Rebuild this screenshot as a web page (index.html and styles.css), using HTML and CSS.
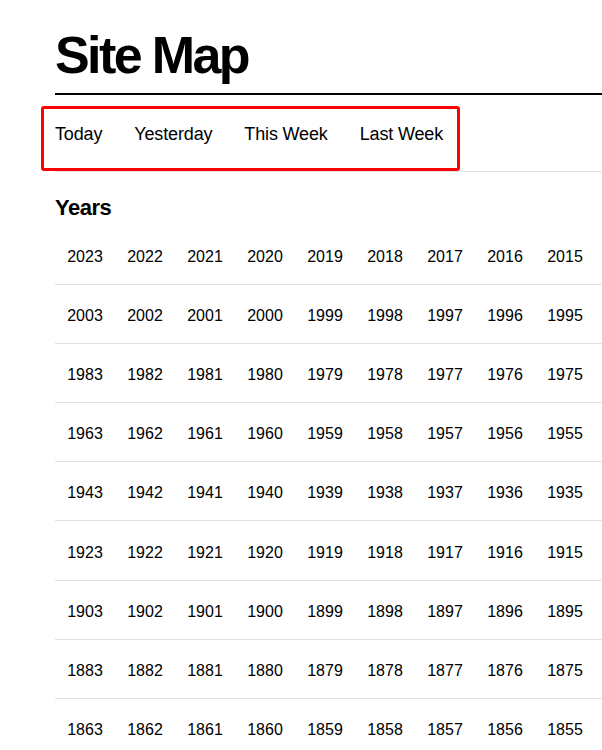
FILE: index.html
```html
<!DOCTYPE html>
<html lang="en">
<head>
  <meta charset="UTF-8">
  <meta name="viewport" content="width=device-width, initial-scale=1.0">
  <title>Site Map</title>
  <link rel="stylesheet" href="styles.css">
</head>
<body>
  <div class="page">
    <h1 class="title">Site Map</h1>
    <nav class="recent">
      <ul class="recent-links">
        <li><a href="#">Today</a></li>
        <li><a href="#">Yesterday</a></li>
        <li><a href="#">This Week</a></li>
        <li><a href="#">Last Week</a></li>
      </ul>
    </nav>
    <h2 class="section-title">Years</h2>
    <ul class="years" id="years"></ul>
  </div>

  <script>
    const yearsList = document.getElementById('years');

    // 20 years per row, newest first
    for (let year = 2023; year >= 1851; year--) {
      const item = document.createElement('li');
      const link = document.createElement('a');
      link.href = '#';
      link.textContent = year;
      item.appendChild(link);
      yearsList.appendChild(item);
    }
  </script>
</body>
</html>
```

FILE: styles.css
```css
body {
  margin: 0;
  font-family: "Liberation Sans", Arial, sans-serif;
  color: #000;
  background: #fff;
  overflow-x: hidden;
}
a {
  color: inherit;
  text-decoration: none;
}
ul {
  list-style: none;
  margin: 0;
  padding: 0;
}
.page {
  padding-left: 55px;
}
.title {
  margin: 25px 0 0;
  padding-bottom: 8px;
  font-size: 52px;
  line-height: 60px;
  font-weight: 700;
  letter-spacing: -2.6px;
  border-bottom: 2px solid #000;
}
.recent {
  padding-top: 11px;
  border-bottom: 1px solid #e2e2e2;
}
.recent-links {
  display: inline-flex;
  gap: 32px;
  margin-left: -14px;
  padding: 13px 14px 22px 11px;
  border: 3px solid #f00;
  border-radius: 3px;
}
.recent-links li {
  font-size: 18px;
  line-height: 24px;
  letter-spacing: -0.15px;
}
.section-title {
  margin: 23px 0 5px;
  font-size: 22px;
  line-height: 26px;
  font-weight: 700;
  letter-spacing: -0.5px;
}
.years {
  display: grid;
  grid-template-columns: repeat(20, 60px);
  width: 1200px;
}
.years li {
  box-sizing: border-box;
  height: 59.1px;
  padding-top: 4px;
  display: flex;
  align-items: center;
  justify-content: center;
  font-size: 16px;
  border-bottom: 1px solid #e2e2e2;
}
```
